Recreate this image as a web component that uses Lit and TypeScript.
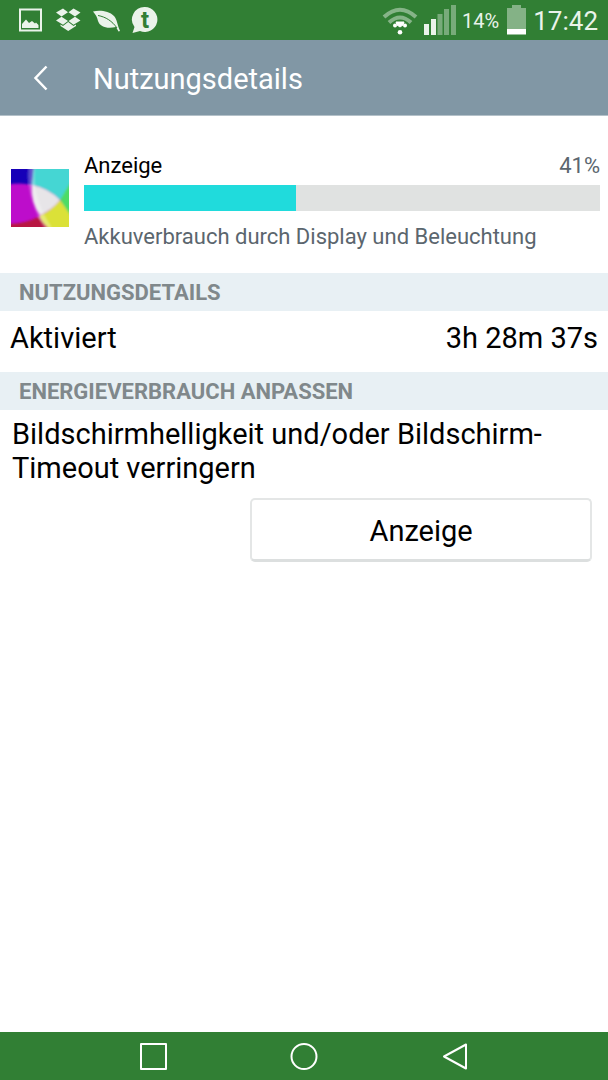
import { LitElement, html, css, svg } from "lit";
import { customElement, property } from "lit/decorators.js";

@customElement("status-bar")
class StatusBar extends LitElement {
  static styles = css`
    :host {
      display: flex;
      justify-content: space-between;
      align-items: center;
      height: 40px;
      padding: 0 10px 0 18px;
      background: #317f34;
      color: #eaf3ea;
    }
    .group {
      display: flex;
      align-items: center;
    }
    .notices {
      gap: 11px;
    }
    .signal {
      margin-left: 6px;
    }
    .percent {
      margin: 2px 8px 0 6px;
      font-size: 20px;
    }
    .clock {
      margin: 2px 0 0 7px;
      font-size: 26px;
    }
    svg {
      display: block;
    }
    .glyph {
      font: 700 24px Roboto, sans-serif;
      fill: #317f34;
    }
  `;

  render() {
    return html`
      <div class="group notices">
        <svg width="26" height="26" viewBox="0 0 26 26" fill="#eaf3ea" aria-hidden="true">
          <path d="M1 1.500H24V24.500H1Z M3 3.500V22.500H22V3.500Z" fill-rule="evenodd" />
          <path d="M4 21V17L8 12.500L11 16L14 14L17 16.500L18 15.500L20.500 18V21Z" />
        </svg>
        <svg width="26" height="26" viewBox="0 0 26 26" fill="#eaf3ea" aria-hidden="true">
          <path d="M8 1.500L13 5.300L6.500 9.500L1 5.500Z M18.500 1.500L25.500 5.500L20 9.500L13.500 5.300Z M1 13.500L6.500 9.800L13 14L8 17.800Z M25.500 13.500L20 9.800L13.500 14L18.500 17.800Z" />
          <path d="M13.200 15L18.500 19L21 17.500V19L13.200 24L5.500 19V17.500L8 19Z" />
        </svg>
        <svg width="28" height="26" viewBox="0 0 28 26" fill="#eaf3ea" aria-hidden="true">
          <path d="M1 4.500C8 3 17 4 22 9C25 12 25 17 28 24L26.500 24.500L24 20C15 22 8 20 6 14C5 10 4 8 1 4.500Z" />
          <path d="M6 8.500C14 10 20 14 25 21" fill="none" stroke="#317f34" />
        </svg>
        <svg width="28" height="28" viewBox="0 0 28 28" fill="#eaf3ea" aria-hidden="true">
          <path d="M14 1A12.500 12.500 0 1 1 9 25L1.500 27L3.500 21A12.500 12.500 0 0 1 14 1Z" />
          <text class="glyph" x="14" y="22" text-anchor="middle">t</text>
        </svg>
      </div>
      <div class="group">
        <svg width="36" height="30" viewBox="0 0 36 30" fill="none" aria-hidden="true">
          <path d="M2 12Q18 -2.500 34 12M7 17.500Q18 7.500 29 17.500" stroke="#86b488" stroke-width="4" />
          <path d="M14 17H22L21 20L18 22L15 20Z" fill="#fff" stroke="#fff" />
          <circle cx="13" cy="20.500" r="2" fill="#fff" />
          <circle cx="23" cy="20.500" r="2" fill="#fff" />
          <circle cx="18" cy="27.300" r="2.300" fill="#fff" />
        </svg>
        <svg class="signal" width="32" height="30" viewBox="0 0 32 30" aria-hidden="true">
          <path d="M0 19H5V30H0ZM7 14H12V30H7Z" fill="#eaf3ea" />
          <path d="M13.500 9H18.500V30H13.500ZM20 4H25V30H20ZM27 0H32V30H27Z" fill="#78ab7a" />
        </svg>
        <span class="percent">14%</span>
        <svg width="19" height="30" viewBox="0 0 19 30" aria-hidden="true">
          <path d="M5 0H14V3H19V24H0V3H5Z" fill="#84b286" />
          <path d="M0 24H19V29.500H0Z" fill="#fff" />
        </svg>
        <span class="clock">17:42</span>
      </div>
    `;
  }
}

@customElement("usage-bar")
class UsageBar extends LitElement {
  @property({ type: Number }) value = 0;

  static styles = css`
    :host {
      display: block;
    }
    .track {
      height: 26px;
      background: #e0e2e1;
    }
    .fill {
      height: 100%;
      background: #20dbdc;
    }
  `;

  render() {
    return html`
      <div class="track" role="progressbar" aria-label="Anzeige" aria-valuenow=${this.value} aria-valuemin="0" aria-valuemax="100">
        <div class="fill" style="width:${this.value}%"></div>
      </div>
    `;
  }
}

const navItems = [
  { label: "Übersicht", shape: svg`<rect x="2" y="2" width="25" height="25" />` },
  { label: "Startseite", shape: svg`<circle cx="14" cy="14.500" r="12.500" />` },
  { label: "Zurück", shape: svg`<path d="M25 2.500V26.500L3 14.500Z" />` },
];

@customElement("app-root")
class AppRoot extends LitElement {
  static styles = css`
    :host {
      display: flex;
      flex-direction: column;
      min-height: 100vh;
      background: #fff;
      color: #000;
      font-family: Roboto, sans-serif;
    }
    button {
      font: inherit;
      color: inherit;
      background: none;
      border: 0;
      padding: 0;
      cursor: pointer;
    }
    svg {
      display: block;
    }
    h1,
    h2,
    p {
      margin: 0;
    }
    header {
      display: flex;
      align-items: center;
      gap: 45px;
      height: 75px;
      padding: 0 33px;
      background: #8197a5;
      border-bottom: 1px solid #b4c1c9;
      color: #fff;
    }
    h1 {
      padding-top: 2px;
      font-size: 29px;
      font-weight: 400;
    }
    main {
      flex: 1;
    }
    .summary {
      display: grid;
      grid-template-columns: 58px 1fr;
      column-gap: 15px;
      align-items: start;
      padding: 35px 8px 21px 11px;
    }
    .swatch {
      margin-top: 18px;
    }
    .line {
      display: flex;
      justify-content: space-between;
      font-size: 22px;
      line-height: 30px;
      margin-bottom: 4px;
    }
    .muted {
      color: #5b666e;
    }
    .note {
      margin-top: 11px;
      font-size: 22px;
      line-height: 30px;
    }
    h2 {
      padding: 2px 19px 0;
      background: #e8f0f4;
      color: #80888b;
      font-size: 22px;
      font-weight: 700;
      line-height: 36px;
      text-transform: uppercase;
    }
    .row {
      display: flex;
      justify-content: space-between;
      padding: 10px 10px 17px;
      font-size: 29px;
      line-height: 34px;
    }
    .advice {
      padding: 7px 12px 13px;
      font-size: 29px;
      line-height: 34px;
    }
    .actions {
      display: grid;
      grid-template-columns: 5fr 7fr;
      padding: 0 16px 0 6px;
    }
    .action {
      grid-column: 2;
      height: 64px;
      padding-top: 2px;
      border: 2px solid #e4e6e6;
      border-bottom: 3px solid #dcdfdf;
      border-radius: 5px;
      font-size: 29px;
    }
    nav {
      display: flex;
      justify-content: center;
      gap: 122px;
      height: 48px;
      background: #317f34;
    }
  `;

  render() {
    return html`
      <status-bar></status-bar>
      <header>
        <button aria-label="Zurück">
          <svg width="15" height="26" viewBox="0 0 15 26" fill="none" stroke="#fff" stroke-width="2.500"><path d="M13.500 1.500L2.500 13L13.500 24.500" /></svg>
        </button>
        <h1>Nutzungsdetails</h1>
      </header>
      <main>
        <section class="summary">
          <svg class="swatch" width="58" height="58" viewBox="0 0 58 58" aria-hidden="true">
            <defs>
              <filter id="soft" x="-10%" y="-10%" width="120%" height="120%"><feGaussianBlur stdDeviation="1" /></filter>
            </defs>
            <rect width="58" height="58" fill="#bd0dcb" />
            <g filter="url(#soft)">
              <path d="M-4 -4H23L21 16Q8 13 -4 16Z" fill="#1905b8" />
              <path d="M23 -4H62V16L49 31Q37 19 21 16Z" fill="#45d6d3" />
              <path d="M62 9L49 31L62 52Z" fill="#4edb65" />
              <path d="M49 31L62 50V62H37L28 47Q40 42 49 31Z" fill="#dbe138" />
              <path d="M-4 55Q14 55 27 48L40 62H-4Z" fill="#b81442" />
              <path d="M21 16Q37 19 49 31Q40 42 29 46Q20 34 21 16Z" fill="#e7e5e8" />
              <path d="M21 -3Q17 28 38 60" fill="none" stroke="#fff" stroke-opacity=".3" stroke-width="6" />
            </g>
          </svg>
          <div>
            <div class="line"><span>Anzeige</span><span class="muted">41%</span></div>
            <usage-bar .value=${41}></usage-bar>
            <p class="note muted">Akkuverbrauch durch Display und Beleuchtung</p>
          </div>
        </section>
        <h2>Nutzungsdetails</h2>
        <div class="row"><span>Aktiviert</span><span>3h 28m 37s</span></div>
        <h2>Energieverbrauch anpassen</h2>
        <p class="advice">Bildschirmhelligkeit und/oder Bildschirm-Timeout verringern</p>
        <div class="actions"><button class="action">Anzeige</button></div>
      </main>
      <nav aria-label="Navigation">
        ${navItems.map(
          (item) => html`<button aria-label=${item.label}>
            <svg width="29" height="29" viewBox="0 0 29 29" fill="none" stroke="#fff" stroke-width="2" stroke-linejoin="round">${item.shape}</svg>
          </button>`
        )}
      </nav>
    `;
  }
}
